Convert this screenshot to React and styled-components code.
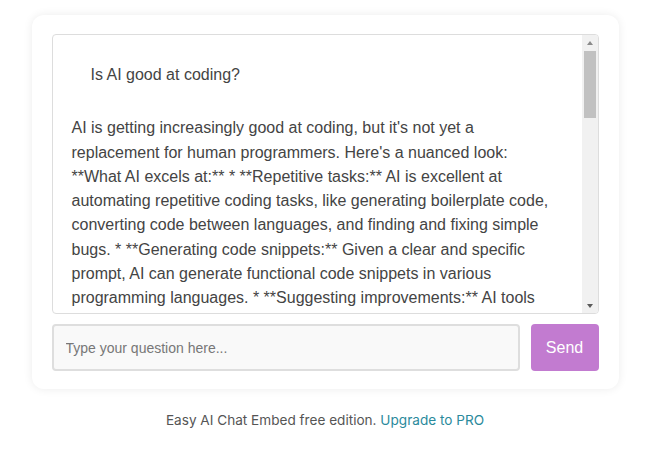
import React, { useState } from 'react';
import styled, { createGlobalStyle } from 'styled-components';

const GlobalStyle = createGlobalStyle`
    body {
        margin: 0;
        background: #ffffff;
        font-family: "Liberation Sans", Arial, sans-serif;
    }
`;

const Page = styled.div`
    padding-top: 15px;
`;

const Card = styled.div`
    width: 547px;
    margin: 0 auto;
    padding: 19px 20px 18px;
    background: #fff;
    border-radius: 12px;
    box-shadow: 0 0 10px rgba(0, 0, 0, 0.08);
`;

const ChatBox = styled.div`
    display: flex;
    height: 280px;
    box-sizing: border-box;
    border: 1px solid #dddddd;
    border-radius: 4px;
    overflow: hidden;
`;

const Messages = styled.div`
    flex: 1;
    overflow-y: hidden;
    padding: 8px 27px 8px 19px;
    color: #444;
    font-size: 16px;
    line-height: 24.3px;
`;

const ScrollBar = styled.div`
    width: 16px;
    display: flex;
    flex-direction: column;
    align-items: center;
    background: #f1f1f1;
`;

const ArrowButton = styled.div`
    height: 15px;
    width: 100%;
    display: flex;
    align-items: center;
    justify-content: center;
`;

const Triangle = styled.span`
    width: 0;
    height: 0;
    border-left: 3.5px solid transparent;
    border-right: 3.5px solid transparent;
    ${({ $down }) => ($down ? 'border-top: 4px solid #5a5a5a;' : 'border-bottom: 4px solid #8a8a8a;')}
`;

const Thumb = styled.div`
    width: 12px;
    height: 67px;
    margin-top: 1px;
    background: #c1c1c1;
`;

const Spacer = styled.div`
    flex: 1;
`;

const Question = styled.div`
    padding: 20px 0 0 19px;
    margin-bottom: 29px;
`;

const Answer = styled.div``;

const InputRow = styled.div`
    display: flex;
    gap: 11px;
    margin-top: 10px;
`;

const Input = styled.input`
    flex: 1;
    height: 47px;
    box-sizing: border-box;
    padding: 0 12px;
    border: 2px solid #dedede;
    border-radius: 4px;
    background: #f9f9f9;
    font-family: "Liberation Sans", Arial, sans-serif;
    font-size: 14px;
    color: #333;
    outline: none;

    &::placeholder {
        color: #777;
    }
`;

const SendButton = styled.button`
    width: 68px;
    height: 47px;
    border: none;
    border-radius: 4px;
    background: #c27bd0;
    color: #fff;
    font-family: "Liberation Sans", Arial, sans-serif;
    font-size: 16px;
    cursor: pointer;
`;

const Footer = styled.p`
    margin: 22px 0 0;
    text-align: center;
    font-family: Inter, "Noto Sans", sans-serif;
    font-size: 13.6px;
    line-height: 18px;
    color: #555;
`;

const Link = styled.a`
    color: #2a8a9c;
    text-decoration: none;
`;

const answer = "AI is getting increasingly good at coding, but it's not yet a replacement for human programmers. Here's a nuanced look: **What AI excels at:** * **Repetitive tasks:** AI is excellent at automating repetitive coding tasks, like generating boilerplate code, converting code between languages, and finding and fixing simple bugs. * **Generating code snippets:** Given a clear and specific prompt, AI can generate functional code snippets in various programming languages. * **Suggesting improvements:** AI tools can analyze existing code and suggest optimizations, refactoring opportunities, and potential security vulnerabilities. * **Learning and explaining:** AI can explain unfamiliar code, answer questions about syntax and libraries, and help beginners understand programming concepts. **Where AI struggles:** * **Understanding context:** AI often lacks a deep understanding of the broader project, business requirements, and the reasons behind design decisions. * **Complex problem solving:** Designing the architecture of large systems and solving novel problems still requires human creativity and judgment. * **Reliability:** AI-generated code can contain subtle bugs, outdated practices, or invented functions, so it must be carefully reviewed and tested. * **Security and ethics:** AI may produce insecure code or reproduce licensed code without attribution. **The bottom line:** AI is a powerful assistant that can significantly boost a programmer's productivity, but it works best as a tool in the hands of a skilled developer who can guide it, review its output, and take responsibility for the final result.";

const App = () => {
    const [question, setQuestion] = useState('');

    return (
        <Page>
            <GlobalStyle />
            <Card>
                <ChatBox>
                    <Messages>
                        <Question>Is AI good at coding?</Question>
                        <Answer>{answer}</Answer>
                    </Messages>
                    <ScrollBar>
                        <ArrowButton>
                            <Triangle />
                        </ArrowButton>
                        <Thumb />
                        <Spacer />
                        <ArrowButton>
                            <Triangle $down />
                        </ArrowButton>
                    </ScrollBar>
                </ChatBox>
                <InputRow>
                    <Input
                        placeholder="Type your question here..."
                        value={question}
                        onChange={(e) => setQuestion(e.target.value)}
                    />
                    <SendButton>Send</SendButton>
                </InputRow>
            </Card>
            <Footer>
                Easy AI Chat Embed free edition. <Link href="#">Upgrade to PRO</Link>
            </Footer>
        </Page>
    );
};

export default App;
